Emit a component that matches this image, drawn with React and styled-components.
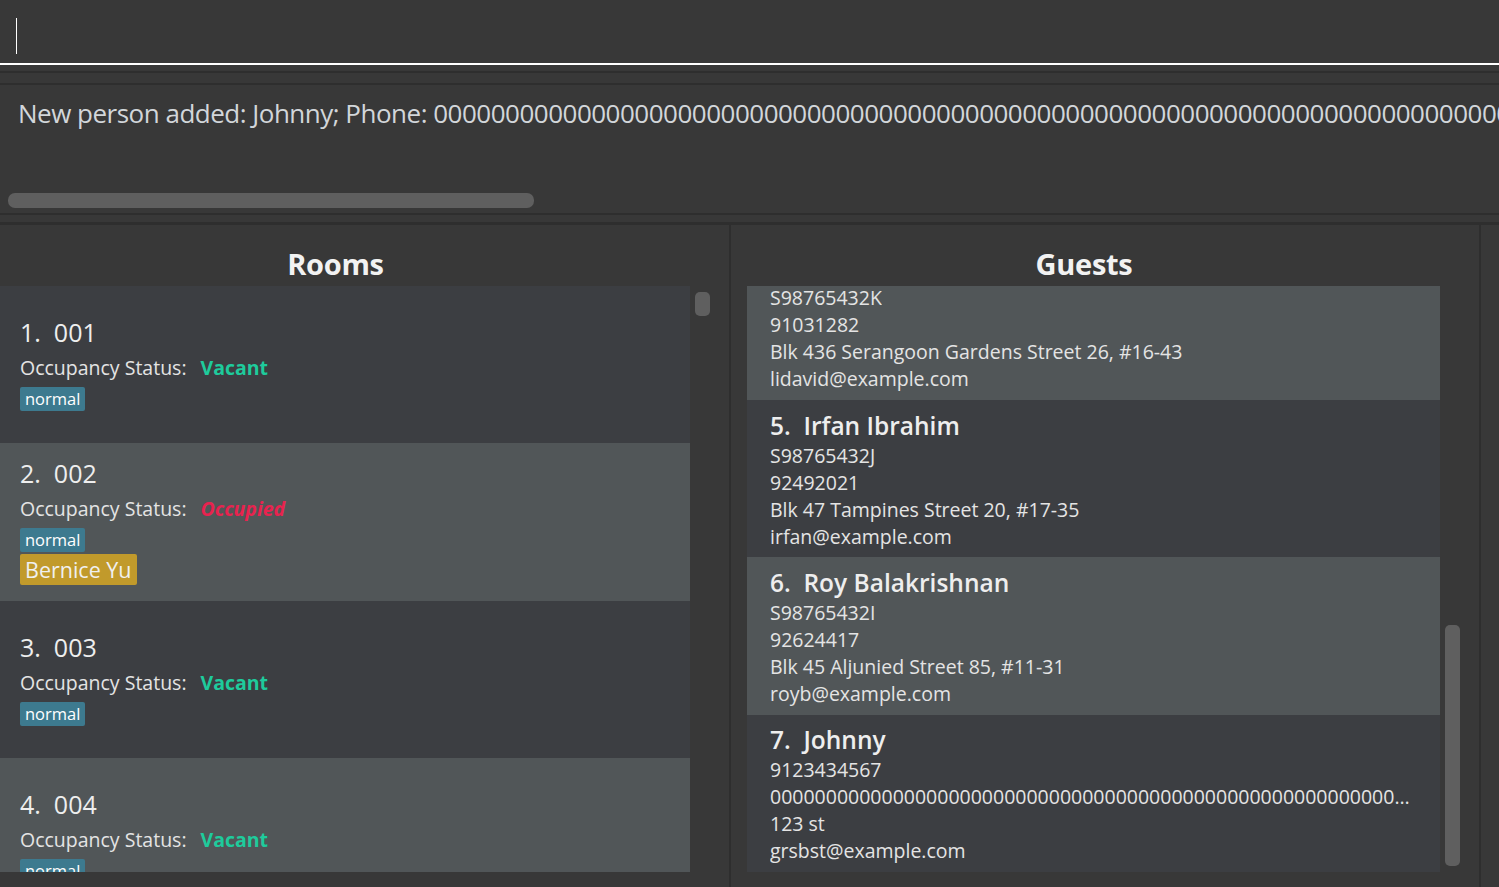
import React from "react";
import styled, { createGlobalStyle } from "styled-components";

const rooms = [
  { id: 1, name: "001", occupied: false, tags: ["normal"] },
  { id: 2, name: "002", occupied: true, tags: ["normal"], guest: "Bernice Yu" },
  { id: 3, name: "003", occupied: false, tags: ["normal"] },
  { id: 4, name: "004", occupied: false, tags: ["normal"] },
];

const guests = [
  { id: 1, name: "Alex Yeoh", lines: ["S98765432A", "87438807", "Blk 30 Geylang Street 29, #06-40", "alexyeoh@example.com"] },
  { id: 2, name: "Bernice Yu", lines: ["S98765432B", "99272758", "Blk 30 Lorong 3 Serangoon Gardens, #07-18", "berniceyu@example.com"] },
  { id: 3, name: "Charlotte Oliveiro", lines: ["S98765432C", "93210283", "Blk 11 Ang Mo Kio Street 74, #11-04", "charlotte@example.com"] },
  { id: 4, name: "David Li", lines: ["S98765432K", "91031282", "Blk 436 Serangoon Gardens Street 26, #16-43", "lidavid@example.com"] },
  { id: 5, name: "Irfan Ibrahim", lines: ["S98765432J", "92492021", "Blk 47 Tampines Street 20, #17-35", "irfan@example.com"] },
  { id: 6, name: "Roy Balakrishnan", lines: ["S98765432I", "92624417", "Blk 45 Aljunied Street 85, #11-31", "royb@example.com"] },
  {
    id: 7,
    name: "Johnny",
    lines: ["9123434567", "0".repeat(120), "123 st", "grsbst@example.com"],
  },
];

function App() {
  return (
    <>
      <GlobalStyle />
      <Window>
        <CommandBox>
          <Caret />
        </CommandBox>
        <Divider $height={6} $bottom={2} />
        <Divider $height={10} $bottom={2} />
        <ResultBox>
          <ResultText>
            New person added: Johnny; Phone: {"0".repeat(120)}
          </ResultText>
          <HScrollTrack>
            <HScrollThumb />
          </HScrollTrack>
        </ResultBox>
        <Divider $top={2} $height={7} $bottom={3} />
        <Panels>
          <Panel $padLeft={0}>
            <PanelTitle>Rooms</PanelTitle>
            <ListArea>
              <ListViewport $width={690}>
                {rooms.map((r) => (
                  <RoomCard key={r.id} $light={r.id % 2 === 0}>
                    <CardTitle>
                      {r.id}.&nbsp;&nbsp;{r.name}
                    </CardTitle>
                    <StatusRow>
                      Occupancy Status:
                      <StatusValue $occupied={r.occupied}>
                        {r.occupied ? "Occupied" : "Vacant"}
                      </StatusValue>
                    </StatusRow>
                    {r.tags.map((t) => (
                      <Tag key={t}>{t}</Tag>
                    ))}
                    {r.guest && <GuestTag>{r.guest}</GuestTag>}
                  </RoomCard>
                ))}
              </ListViewport>
              <VScrollTrack>
                <VScrollThumb $top={6} $height={24} />
              </VScrollTrack>
            </ListArea>
          </Panel>
          <Panel $padLeft={16}>
            <PanelTitle>Guests</PanelTitle>
            <ListArea>
              <ListViewport $width={693} $bottom>
                {guests.map((g) => (
                  <GuestCard key={g.id} $light={g.id % 2 === 0}>
                    <CardTitle $semi>
                      {g.id}.&nbsp;&nbsp;{g.name}
                    </CardTitle>
                    {g.lines.map((l, i) => (
                      <DetailLine key={i}>{l}</DetailLine>
                    ))}
                  </GuestCard>
                ))}
              </ListViewport>
              <VScrollTrack>
                <VScrollThumb $top={339} $height={241} />
              </VScrollTrack>
            </ListArea>
          </Panel>
          <Sliver />
        </Panels>
      </Window>
    </>
  );
}

const GlobalStyle = createGlobalStyle`
  html, body {
    margin: 0;
    padding: 0;
    background: #383838;
    overflow: hidden;
  }
  body {
    font-family: "Open Sans", "Noto Sans", sans-serif;
    color: #eeeeee;
  }
`;

const Window = styled.div`
  width: 1499px;
  height: 887px;
  display: flex;
  flex-direction: column;
  background: #383838;
  overflow: hidden;
`;

const CommandBox = styled.div`
  height: 63px;
  padding-left: 16px;
  display: flex;
  align-items: center;
  border-bottom: 2px solid #ffffff;
  flex-shrink: 0;
`;

const Caret = styled.div`
  width: 1px;
  height: 36px;
  background: #ffffff;
  margin-top: 8px;
`;

const Divider = styled.div`
  flex-shrink: 0;
  height: ${(p) => p.$height}px;
  border-top: ${(p) => p.$top || 0}px solid #2e2e2e;
  border-bottom: ${(p) => p.$bottom || 0}px solid #2e2e2e;
`;

const ResultBox = styled.div`
  height: 128px;
  display: flex;
  flex-direction: column;
  flex-shrink: 0;
  overflow: hidden;
`;

const ResultText = styled.div`
  padding: 9px 0 0 18px;
  font-size: 26px;
  letter-spacing: -0.5px;
  line-height: 38px;
  color: #d2d6da;
  white-space: nowrap;
  height: 108px;
  box-sizing: border-box;
`;

const HScrollTrack = styled.div`
  padding: 0 0 0 8px;
  height: 15px;
`;

const HScrollThumb = styled.div`
  width: 526px;
  height: 15px;
  border-radius: 7px;
  background: #5f5f5f;
`;

const Panels = styled.div`
  flex: 1;
  display: flex;
  min-height: 0;
`;

const Panel = styled.div`
  display: flex;
  flex-direction: column;
  padding: 0 14px 15px ${(p) => p.$padLeft}px;
  border-right: 2px solid #2e2e2e;
  flex-shrink: 0;
  min-height: 0;
`;

const PanelTitle = styled.div`
  height: 61px;
  display: flex;
  align-items: center;
  justify-content: center;
  padding: 15px 44px 0 0;
  box-sizing: border-box;
  font-size: 29px;
  font-weight: 700;
  color: #f2f2f2;
  letter-spacing: -0.3px;
`;

const ListArea = styled.div`
  flex: 1;
  display: flex;
  min-height: 0;
`;

const ListViewport = styled.div`
  width: ${(p) => p.$width}px;
  height: 586px;
  display: flex;
  flex-direction: column;
  justify-content: ${(p) => (p.$bottom ? "flex-end" : "flex-start")};
  overflow: hidden;
  background: #383838;
`;

const cardBase = `
  flex-shrink: 0;
  height: 157.4px;
  box-sizing: border-box;
  display: flex;
  flex-direction: column;
  justify-content: center;
  align-items: flex-start;
`;

const RoomCard = styled.div`
  ${cardBase}
  padding: 0 20px 2px;
  background: ${(p) => (p.$light ? "#515658" : "#3c3e42")};
`;

const GuestCard = styled.div`
  ${cardBase}
  padding: 2px 23px 0;
  background: ${(p) => (p.$light ? "#515658" : "#3c3e42")};
`;

const CardTitle = styled.div`
  font-size: ${(p) => (p.$semi ? "24.5px" : "25px")};
  font-weight: ${(p) => (p.$semi ? 600 : 400)};
  color: #eeeeee;
  line-height: 32px;
  margin-bottom: ${(p) => (p.$semi ? "0" : "4px")};
  white-space: nowrap;
`;

const StatusRow = styled.div`
  font-size: 19.5px;
  color: #e4e4e4;
  line-height: 32px;
  display: flex;
  gap: 14px;
  white-space: nowrap;
`;

const StatusValue = styled.span`
  font-weight: 700;
  font-style: ${(p) => (p.$occupied ? "italic" : "normal")};
  color: ${(p) => (p.$occupied ? "#e8234f" : "#1ecb9c")};
`;

const Tag = styled.span`
  margin-top: 3px;
  background: #3d7a8f;
  color: #ffffff;
  font-size: 16.5px;
  line-height: 24px;
  padding: 0 5px;
  border-radius: 2px;
`;

const GuestTag = styled.span`
  margin-top: 2px;
  background: #c19a2b;
  color: #f0f0f0;
  font-size: 21.5px;
  line-height: 31px;
  padding: 0 5px;
  border-radius: 2px;
`;

const DetailLine = styled.div`
  font-size: 19.5px;
  line-height: 27px;
  color: #e4e4e4;
  white-space: nowrap;
  overflow: hidden;
  text-overflow: ellipsis;
  max-width: 100%;
`;

const VScrollTrack = styled.div`
  width: 25px;
  padding-left: 5px;
  box-sizing: border-box;
  display: flex;
  flex-direction: column;
`;

const VScrollThumb = styled.div`
  width: 15px;
  margin-top: ${(p) => p.$top}px;
  height: ${(p) => p.$height}px;
  border-radius: 5px;
  background: #5f5f5f;
`;

const Sliver = styled.div`
  flex: 1;
`;

export default App;
